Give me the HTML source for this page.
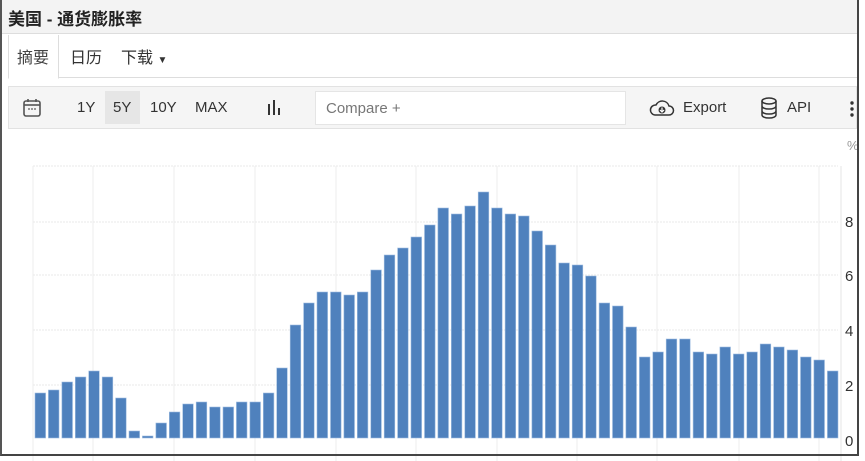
<!DOCTYPE html>
<html><head><meta charset="utf-8"><style>
*{margin:0;padding:0;box-sizing:border-box}
body{width:865px;height:461px;background:#fff;font-family:"Liberation Sans","Noto Sans CJK SC",sans-serif;position:relative;overflow:hidden}
.frame{position:absolute;left:0;top:0;width:859px;height:456px;border:2px solid #444;border-top:none;border-left:2px solid #555}
.title{position:absolute;left:2px;top:0;width:855px;height:34px;background:#f3f3f3;border-bottom:1px solid #ddd;font-size:17px;font-weight:bold;color:#222;padding:5px 0 0 6px}
.tabs{position:absolute;left:8px;top:35px;width:849px;height:43px;border-bottom:1px solid #ddd}
.tab{position:absolute;top:9px;font-size:16px;color:#333}
.act{position:absolute;left:0;top:0;width:51px;height:44px;border:1px solid #ddd;border-bottom:1px solid #fff;border-top:none;background:#fff}
.tb{position:absolute;left:8px;top:86px;width:849px;height:43px;background:#f5f5f5;border:1px solid #e2e2e2}
.tb span{position:absolute;top:12px;font-size:15px;color:#333}
.cmp{position:absolute;left:306px;top:4px;width:311px;height:34px;background:#fff;border:1px solid #e5e5e5}
</style></head><body>
<div class="title">美国 - 通货膨胀率</div>
<div class="tabs">
<div class="act"></div>
<div class="tab" style="left:9px;color:#444">摘要</div>
<div class="tab" style="left:62px">日历</div>
<div class="tab" style="left:113px">下载 <span style="font-size:10px">▼</span></div>
</div>
<div class="tb">
<svg style="position:absolute;left:13px;top:11px" width="20" height="20" viewBox="0 0 20 20"><rect x="2" y="3" width="16" height="15" rx="2" fill="none" stroke="#555" stroke-width="1.6"/><line x1="2" y1="7" x2="18" y2="7" stroke="#555" stroke-width="1.6"/><line x1="6" y1="1" x2="6" y2="4" stroke="#555" stroke-width="1.6"/><line x1="14" y1="1" x2="14" y2="4" stroke="#555" stroke-width="1.6"/><circle cx="7" cy="11" r=".9" fill="#555"/><circle cx="10" cy="11" r=".9" fill="#555"/><circle cx="13" cy="11" r=".9" fill="#555"/></svg>
<span style="left:68px">1Y</span>
<div style="position:absolute;left:96px;top:4px;width:35px;height:33px;background:#e6e6e6"></div>
<span style="left:104px">5Y</span>
<span style="left:141px">10Y</span>
<span style="left:186px">MAX</span>
<svg style="position:absolute;left:258px;top:13px" width="16" height="16"><rect x="1" y="4" width="2" height="11" fill="#333"/><rect x="6" y="0" width="2" height="15" fill="#333"/><rect x="11" y="8" width="2" height="7" fill="#333"/></svg>
<div class="cmp"><span style="left:10px;top:8px;color:#777">Compare +</span></div>
<svg style="position:absolute;left:640px;top:12px" width="26" height="18" viewBox="0 0 26 18"><path d="M6 16h14a4.5 4.5 0 0 0 0-9 7 7 0 0 0-13-1A5 5 0 0 0 6 16z" fill="none" stroke="#333" stroke-width="1.5"/><circle cx="13" cy="11" r="3.5" fill="#333"/><path d="M13 8.5v4M11 11l2 2 2-2" stroke="#fff" stroke-width="1.2" fill="none"/></svg>
<span style="left:674px">Export</span>
<svg style="position:absolute;left:751px;top:10px" width="18" height="22" viewBox="0 0 18 22"><ellipse cx="9" cy="4" rx="7" ry="3" fill="none" stroke="#333" stroke-width="1.5"/><path d="M2 4v14c0 1.7 3 3 7 3s7-1.3 7-3V4M2 9c0 1.7 3 3 7 3s7-1.3 7-3M2 14c0 1.7 3 3 7 3s7-1.3 7-3" fill="none" stroke="#333" stroke-width="1.5"/></svg>
<span style="left:778px">API</span>
<svg style="position:absolute;left:840px;top:13px" width="6" height="18"><circle cx="3" cy="3" r="1.7" fill="#333"/><circle cx="3" cy="9" r="1.7" fill="#333"/><circle cx="3" cy="15" r="1.7" fill="#333"/></svg>
</div>
<svg id="ch" style="position:absolute;left:0;top:130px" width="865" height="331"></svg>
<div class="frame"></div>
<script>
var s='';var o=130;
[166,222,275,330,385].forEach(function(y){s+='<line x1="33" x2="838" y1="'+(y-o)+'" y2="'+(y-o)+'" stroke="#e8e8e8" stroke-dasharray="2,1"/>';});
[33,93,174,255,336,416,497,577,657,739,819].forEach(function(x){s+='<line x1="'+x+'" x2="'+x+'" y1="'+(166-o)+'" y2="331" stroke="#ececec"/>';});
s+='<line x1="841" x2="841" y1="'+(166-o)+'" y2="331" stroke="#e4e4e4"/>';
var t=[393,390,382,377,371,377,398,431,436,423,412,404,402,407,407,402,402,393,368,325,303,292,292,295,292,270,255,248,237,225,208,214,206,192,208,214,216,231,245,263,265,276,303,306,327,357,352,339,339,352,354,347,354,352,344,347,350,357,360,371];
t.forEach(function(y,i){var x=35+i*13.43;s+='<rect x="'+x.toFixed(1)+'" y="'+(y-o)+'" width="10.6" height="'+(438-y)+'" fill="#4f81bd" stroke="#9fbde0" stroke-width="0.6"/>';});
[[8,222],[6,276],[4,331],[2,386],[0,441]].forEach(function(a){s+='<text x="845" y="'+(a[1]-o+5)+'" font-size="15" fill="#333" font-family="Liberation Sans">'+a[0]+'</text>';});
s+='<text x="847" y="'+(150-o)+'" font-size="13" fill="#999" font-family="Liberation Sans">%</text>';
document.getElementById('ch').innerHTML=s;
</script>
</body></html>
